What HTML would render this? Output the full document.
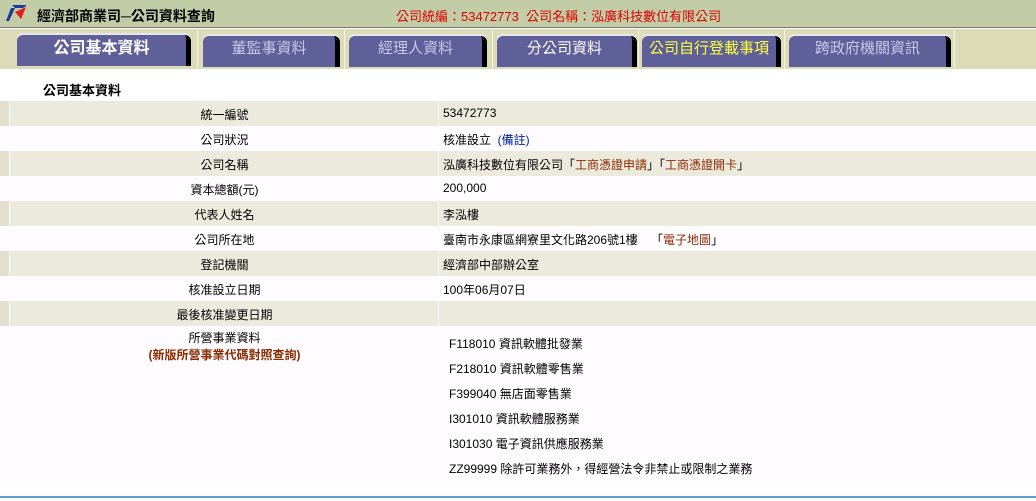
<!DOCTYPE html>
<html><head><meta charset="utf-8"><style>
*{margin:0;padding:0;box-sizing:border-box}
body{width:1036px;height:501px;background:#fff;font-family:"Liberation Sans","Noto Sans CJK TC",sans-serif;font-size:12px;color:#000;position:relative;overflow:hidden}
.a{position:absolute}
#hdr{left:0;top:0;width:1036px;height:28px;background:#c2cca6;border-bottom:1px solid #777}
#bar{left:0;top:29px;width:1036px;height:40px;background:#dcdcb8}
.tab{position:absolute;top:7px;height:31px;background:#5f5f99;border-radius:6px 6px 0 0;border-right:5px solid #000;color:#c8c8e8;font-size:15px;text-align:center;line-height:26px;box-shadow:0 -2px 0 #e8e8e8}
.sep{position:absolute;top:0;width:1px;height:40px;background:#f4f4e0}
.row{position:absolute;left:0;width:1036px;height:25px}
.b{background:#ece9dd}
.w{background:#fffcff}
.row .s{position:absolute;left:0;top:0;width:10px;height:25px;background:#e2dfd0;border-right:1px solid #fff}
.row .l{position:absolute;left:11px;width:427px;text-align:center;top:5px}
.row .r{position:absolute;left:443px;top:5px}
.row .d{position:absolute;left:438px;top:0;width:1px;height:25px;background:#fff}
.br{color:#8b2a00}
</style></head><body>
<div id="hdr" class="a">
<svg class="a" style="left:6px;top:4px" width="22" height="18" viewBox="0 0 22 18"><path d="M6 1h15l-4 3H9z" fill="#1a3a9a"/><path d="M5 4h4L3 17H0z" fill="#1a3a9a"/><path d="M9 8l11-5-5 12z" fill="#e02020"/></svg>
<div class="a" style="left:37px;top:6px;font-size:14px;font-weight:bold">經濟部商業司─公司資料查詢</div>
<div class="a" style="left:396px;top:6px;font-size:13px;color:#e00000">公司統編：53472773 &nbsp;公司名稱：泓廣科技數位有限公司</div>
</div>
<div id="bar" class="a">
<div class="sep" style="left:197px"></div><div class="sep" style="left:344px"></div><div class="sep" style="left:492px"></div><div class="sep" style="left:638px"></div><div class="sep" style="left:784px"></div><div class="sep" style="left:954px"></div>
<div class="tab" style="left:17px;width:174px;top:6px;color:#fff;font-weight:bold;font-size:16px;line-height:27px">公司基本資料</div>
<div class="tab" style="left:203px;width:137px">董監事資料</div>
<div class="tab" style="left:349px;width:138px">經理人資料</div>
<div class="tab" style="left:497px;width:140px;color:#fff">分公司資料</div>
<div class="tab" style="left:642px;width:139px;color:#ffff40">公司自行登載事項</div>
<div class="tab" style="left:789px;width:162px">跨政府機關資訊</div>
</div>
<div class="a" style="left:43px;top:80px;font-size:13px;font-weight:bold">公司基本資料</div>
<div class="row b" style="top:101px"><div class="s"></div><div class="l">統一編號</div><div class="d"></div><div class="r">53472773</div></div>
<div class="row w" style="top:126px"><div class="l">公司狀況</div><div class="r">核准設立 &nbsp;<span style="color:#0020a0">(備註)</span></div></div>
<div class="row b" style="top:151px"><div class="s"></div><div class="l">公司名稱</div><div class="d"></div><div class="r">泓廣科技數位有限公司「<span class="br">工商憑證申請</span>」「<span class="br">工商憑證開卡</span>」</div></div>
<div class="row w" style="top:176px"><div class="l">資本總額(元)</div><div class="r">200,000</div></div>
<div class="row b" style="top:201px"><div class="s"></div><div class="l">代表人姓名</div><div class="d"></div><div class="r">李泓樓</div></div>
<div class="row w" style="top:226px"><div class="l">公司所在地</div><div class="r">臺南市永康區網寮里文化路206號1樓 &nbsp; &nbsp;「<span class="br">電子地圖</span>」</div></div>
<div class="row b" style="top:251px"><div class="s"></div><div class="l">登記機關</div><div class="d"></div><div class="r">經濟部中部辦公室</div></div>
<div class="row w" style="top:276px"><div class="l">核准設立日期</div><div class="r">100年06月07日</div></div>
<div class="row b" style="top:301px"><div class="s"></div><div class="l">最後核准變更日期</div><div class="d"></div><div class="r"></div></div>
<div class="a w" style="left:0;top:326px;width:1036px;height:157px"></div>
<div class="a" style="left:11px;top:330px;width:427px;text-align:center;line-height:17px">所營事業資料<br><b style="color:#8b2a00">(新版所營事業代碼對照查詢)</b></div>
<div class="a" style="left:449px;top:332px;line-height:25px">F118010 資訊軟體批發業<br>F218010 資訊軟體零售業<br>F399040 無店面零售業<br>I301010 資訊軟體服務業<br>I301030 電子資訊供應服務業<br>ZZ99999 除許可業務外，得經營法令非禁止或限制之業務</div>
<div class="a" style="left:0;top:496px;width:1036px;height:2px;background:#5aa0d8"></div>
</body></html>
